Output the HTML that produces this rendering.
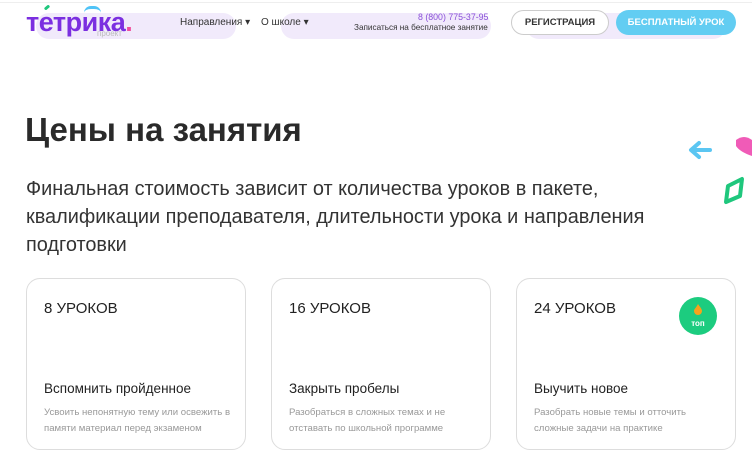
<!DOCTYPE html>
<html><head><meta charset="utf-8"><style>
*{margin:0;padding:0;box-sizing:border-box}
body{width:752px;height:457px;overflow:hidden;background:#fff;font-family:"Liberation Sans","Noto Sans CJK SC",sans-serif;color:#222;position:relative}
.a{position:absolute}
.pill{position:absolute;background:#f1eafb;border-radius:14px}
.card{position:absolute;top:278px;width:220px;height:172px;border:1px solid #ddd;border-radius:14px;background:#fff}
.card .h{position:absolute;left:17px;top:21px;font-size:15px;color:#222}
.card .t{position:absolute;left:17px;top:102px;font-size:13.5px;color:#222}
.card .d{position:absolute;left:17px;top:126px;font-size:9.6px;line-height:16px;color:#999;width:190px}
</style></head><body>
<div class="a" style="left:0;top:2px;width:752px;height:1px;background:#eee"></div>
<div class="pill" style="left:36px;top:13px;width:200px;height:26px"></div>
<div class="pill" style="left:281px;top:13px;width:210px;height:26px"></div>
<div class="pill" style="left:526px;top:13px;width:200px;height:26px"></div>
<div class="a" style="left:26px;top:7px;font-size:27px;font-weight:bold;color:#7b2fe0;letter-spacing:-0.5px">тетрика<span style="color:#f0509c">.</span></div>
<div class="a" style="left:84px;top:6px;width:17px;height:7px;border-top:3px solid #4fc3f7;border-radius:10px 10px 0 0"></div>
<div class="a" style="left:44px;top:6px;width:6px;height:3px;background:#1fc77d;border-radius:2px;transform:rotate(-40deg)"></div>
<div class="a" style="left:97px;top:29px;font-size:8px;color:#bbb">проект</div>
<div class="a" style="left:180px;top:17px;font-size:10px;color:#333">Направления ▾</div>
<div class="a" style="left:261px;top:17px;font-size:10px;color:#333">О школе ▾</div>
<div class="a" style="left:418px;top:12px;font-size:8.8px;color:#8a4fd8">8 (800) 775-37-95</div>
<div class="a" style="left:354px;top:23px;font-size:8.2px;color:#333">Записаться на бесплатное занятие</div>
<div class="a" style="left:511px;top:10px;width:98px;height:25px;border:1px solid #ccc;border-radius:13px;background:#fff;font-size:9.5px;font-weight:bold;text-align:center;line-height:23px;color:#333">РЕГИСТРАЦИЯ</div>
<div class="a" style="left:616px;top:10px;width:120px;height:25px;border-radius:13px;background:#62cdf2;font-size:9.5px;font-weight:bold;text-align:center;line-height:25px;color:#fff">БЕСПЛАТНЫЙ УРОК</div>
<div class="a" style="left:25px;top:111px;font-size:33px;font-weight:bold;color:#2a2a2a">Цены на занятия</div>
<div class="a" style="left:26px;top:175px;font-size:19.9px;line-height:28px;color:#333;width:720px">Финальная стоимость зависит от количества уроков в пакете,<br>квалификации преподавателя, длительности урока и направления<br>подготовки</div>
<svg class="a" style="left:686px;top:136px" width="66" height="72">
<path d="M24 14 H6 M13 7 L5 14 L13 21" stroke="#5bc6f2" stroke-width="4" fill="none" stroke-linecap="round" stroke-linejoin="round"/>
<path d="M50 4 Q58 -2 66 4 L66 20 Q54 16 50 10Z" fill="#f05bb7"/>
<path d="M42 50 L56 43 L54 60 L40 66Z" stroke="#1fc77d" stroke-width="4" fill="none" stroke-linejoin="round"/>
</svg>
<div class="card" style="left:26px"><div class="h">8 УРОКОВ</div><div class="t">Вспомнить пройденное</div><div class="d">Усвоить непонятную тему или освежить в памяти материал перед экзаменом</div></div>
<div class="card" style="left:271px"><div class="h">16 УРОКОВ</div><div class="t">Закрыть пробелы</div><div class="d">Разобраться в сложных темах и не отставать по школьной программе</div></div>
<div class="card" style="left:516px"><div class="h">24 УРОКОВ</div><div class="t">Выучить новое</div><div class="d">Разобрать новые темы и отточить сложные задачи на практике</div></div>
<div class="a" style="left:679px;top:297px;width:38px;height:38px;border-radius:50%;background:#1ccc7f;color:#fff;font-size:8px;font-weight:bold;text-align:center;padding-top:7px;line-height:11px"><svg width="10" height="11" viewBox="0 0 10 11"><path d="M5 0 C7 3 9 5 9 7 A4 4 0 0 1 1 7 C1 5 3 4 5 0Z" fill="#f7a21b"/></svg><br>топ</div>
</body></html>
